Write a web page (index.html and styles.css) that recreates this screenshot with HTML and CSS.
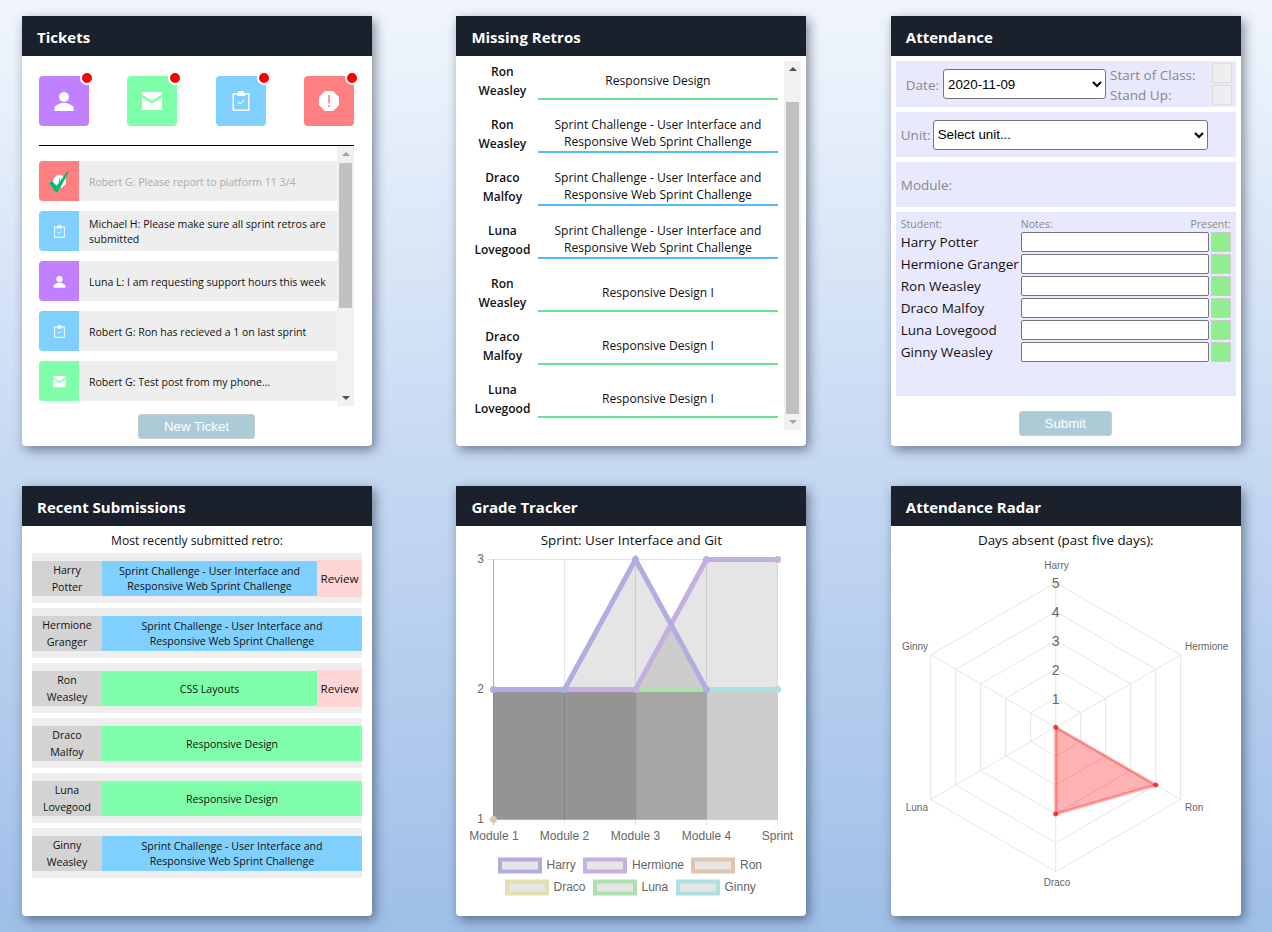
FILE: index.html
```html
<!DOCTYPE html>
<html lang="en">
<head>
    <meta charset="UTF-8">
    <meta name="viewport" content="width=device-width, initial-scale=1.0">
    <title>Dashboard</title>
    <link rel="stylesheet" href="styles.css">
</head>
<body>
    <!-- icon sprites -->
    <svg class="sprites" width="0" height="0">
        <symbol id="i-person" viewBox="0 0 24 24"><circle cx="12" cy="8" r="5"/><path d="M2.500 22v-3.500c0-2 4.500-3 6.500-4.500h6c2 1.500 6.500 2.500 6.500 4.500V22z"/></symbol>
        <symbol id="i-mail" viewBox="0 0 24 24"><path d="M2 3h20v2.500l-10 6-10-6z"/><path d="M2 8.500l10 6 10-6V21H2z"/></symbol>
        <symbol id="i-clip" viewBox="0 0 24 24"><path fill-rule="evenodd" d="M3.500 4H9V2h6v2h5.500v18h-17zM5 5.500v15h14v-15h-3V7H8V5.500z"/><path d="M8.500 13l.7-.7 2 2 3.800-3.900.7.700-4.500 4.600z"/></symbol>
        <symbol id="i-stop" viewBox="0 0 24 24"><path fill-rule="evenodd" d="M8 2h8l6 6v8l-6 6H8l-6-6V8zM11.200 6v8.500h1.600V6zM11.200 16v2h1.600v-2z"/></symbol>
    </svg>

    <div class="dashboard">

        <!-- Tickets -->
        <section class="card">
            <h2 class="card-title">Tickets</h2>
            <div class="tickets">
                <div class="ticket-types">
                    <div class="type bg-purple"><svg class="icon-big"><use href="#i-person"/></svg><span class="dot"></span></div>
                    <div class="type bg-green"><svg class="icon-big"><use href="#i-mail"/></svg><span class="dot"></span></div>
                    <div class="type bg-blue"><svg class="icon-big"><use href="#i-clip"/></svg><span class="dot"></span></div>
                    <div class="type bg-red"><svg class="icon-big"><use href="#i-stop"/></svg><span class="dot"></span></div>
                </div>
                <div class="ticket-box">
                    <div class="ticket-list">
                        <div class="ticket done">
                            <div class="ticket-icon bg-red">
                                <svg class="icon-small"><use href="#i-stop"/></svg>
                                <svg class="check" viewBox="0 0 22 22"><path d="M0 12l3-2 5 5L19 0h2L9 22H7z"/></svg>
                            </div>
                            <p>Robert G: Please report to platform 11 3/4</p>
                        </div>
                        <div class="ticket">
                            <div class="ticket-icon bg-blue"><svg class="icon-small"><use href="#i-clip"/></svg></div>
                            <p>Michael H: Please make sure all sprint retros are submitted</p>
                        </div>
                        <div class="ticket">
                            <div class="ticket-icon bg-purple"><svg class="icon-small"><use href="#i-person"/></svg></div>
                            <p>Luna L: I am requesting support hours this week</p>
                        </div>
                        <div class="ticket">
                            <div class="ticket-icon bg-blue"><svg class="icon-small"><use href="#i-clip"/></svg></div>
                            <p>Robert G: Ron has recieved a 1 on last sprint</p>
                        </div>
                        <div class="ticket">
                            <div class="ticket-icon bg-green"><svg class="icon-small"><use href="#i-mail"/></svg></div>
                            <p>Robert G: Test post from my phone...</p>
                        </div>
                    </div>
                    <div class="scrollbar scroll-tickets">
                        <span class="arrow-up"></span>
                        <span class="thumb"></span>
                        <span class="arrow-down"></span>
                    </div>
                </div>
                <button class="btn btn-ticket">New Ticket</button>
            </div>
        </section>

        <!-- Missing Retros -->
        <section class="card">
            <h2 class="card-title">Missing Retros</h2>
            <div class="retros">
                <div class="retro-list">
                    <div class="retro"><div class="retro-name">Ron Weasley</div><div class="retro-unit line-green">Responsive Design</div></div>
                    <div class="retro"><div class="retro-name">Ron Weasley</div><div class="retro-unit line-blue">Sprint Challenge - User Interface and Responsive Web Sprint Challenge</div></div>
                    <div class="retro"><div class="retro-name">Draco Malfoy</div><div class="retro-unit line-blue">Sprint Challenge - User Interface and Responsive Web Sprint Challenge</div></div>
                    <div class="retro"><div class="retro-name">Luna Lovegood</div><div class="retro-unit line-blue">Sprint Challenge - User Interface and Responsive Web Sprint Challenge</div></div>
                    <div class="retro"><div class="retro-name">Ron Weasley</div><div class="retro-unit line-green">Responsive Design I</div></div>
                    <div class="retro"><div class="retro-name">Draco Malfoy</div><div class="retro-unit line-green">Responsive Design I</div></div>
                    <div class="retro"><div class="retro-name">Luna Lovegood</div><div class="retro-unit line-green">Responsive Design I</div></div>
                </div>
                <div class="scrollbar scroll-retros">
                    <span class="arrow-up"></span>
                    <span class="thumb"></span>
                    <span class="arrow-down"></span>
                </div>
            </div>
        </section>

        <!-- Attendance -->
        <section class="card">
            <h2 class="card-title">Attendance</h2>
            <div class="attendance">
                <div class="panel panel-date">
                    <label class="label date-label">Date:</label>
                    <select class="date-select"><option>2020-11-09</option></select>
                    <div class="class-labels">
                        <span class="label">Start of Class:</span>
                        <span class="label">Stand Up:</span>
                    </div>
                    <div class="class-boxes">
                        <span class="box"></span>
                        <span class="box"></span>
                    </div>
                </div>
                <div class="panel panel-unit">
                    <label class="label">Unit:</label>
                    <select class="unit-select"><option>Select unit...</option></select>
                </div>
                <div class="panel panel-module">
                    <span class="label">Module:</span>
                </div>
                <div class="panel panel-students">
                    <div class="student-head">
                        <span class="col-name">Student:</span>
                        <span class="col-notes">Notes:</span>
                        <span class="col-present">Present:</span>
                    </div>
                    <div class="student"><span class="col-name">Harry Potter</span><input class="col-notes" type="text"><span class="present"></span></div>
                    <div class="student"><span class="col-name">Hermione Granger</span><input class="col-notes" type="text"><span class="present"></span></div>
                    <div class="student"><span class="col-name">Ron Weasley</span><input class="col-notes" type="text"><span class="present"></span></div>
                    <div class="student"><span class="col-name">Draco Malfoy</span><input class="col-notes" type="text"><span class="present"></span></div>
                    <div class="student"><span class="col-name">Luna Lovegood</span><input class="col-notes" type="text"><span class="present"></span></div>
                    <div class="student"><span class="col-name">Ginny Weasley</span><input class="col-notes" type="text"><span class="present"></span></div>
                </div>
                <button class="btn btn-submit">Submit</button>
            </div>
        </section>

        <!-- Recent Submissions -->
        <section class="card">
            <h2 class="card-title">Recent Submissions</h2>
            <div class="submissions">
                <p class="sub-title">Most recently submitted retro:</p>
                <div class="submission"><div class="sub-name">Harry Potter</div><div class="sub-unit bg-blue">Sprint Challenge - User Interface and<br>Responsive Web Sprint Challenge</div><div class="sub-review">Review</div></div>
                <div class="submission"><div class="sub-name">Hermione Granger</div><div class="sub-unit bg-blue">Sprint Challenge - User Interface and<br>Responsive Web Sprint Challenge</div></div>
                <div class="submission"><div class="sub-name">Ron Weasley</div><div class="sub-unit bg-green">CSS Layouts</div><div class="sub-review">Review</div></div>
                <div class="submission"><div class="sub-name">Draco Malfoy</div><div class="sub-unit bg-green">Responsive Design</div></div>
                <div class="submission"><div class="sub-name">Luna Lovegood</div><div class="sub-unit bg-green">Responsive Design</div></div>
                <div class="submission"><div class="sub-name">Ginny Weasley</div><div class="sub-unit bg-blue">Sprint Challenge - User Interface and<br>Responsive Web Sprint Challenge</div></div>
            </div>
        </section>

        <!-- Grade Tracker -->
        <section class="card">
            <h2 class="card-title">Grade Tracker</h2>
            <p class="chart-title">Sprint: User Interface and Git</p>
            <svg class="chart" viewBox="0 0 350 350" width="350" height="350">
                <!-- grid -->
                <g class="grid">
                    <path d="M32 9.500H321.500M32 139.500H321.500M32 269.500H321.500"/>
                    <path d="M108.500 9V275M179.500 9V275M250.500 9V275M321.500 9V275"/>
                    <path class="axis" d="M37.500 9V275"/>
                </g>
                <!-- dataset fills, last dataset first -->
                <g class="fills">
                    <polygon points="37.500,139.500 321.500,139.500 321.500,269.500 37.500,269.500"/>
                    <polygon points="37.500,139.500 250.500,139.500 250.500,269.500 37.500,269.500"/>
                    <polygon points="37.500,139.500 179.500,139.500 179.500,269.500 37.500,269.500"/>
                    <polygon points="37.500,139.500 179.500,139.500 250.500,9.500 321.500,9.500 321.500,269.500 37.500,269.500"/>
                    <polygon points="37.500,139.500 108.500,139.500 179.500,9.500 250.500,139.500 250.500,269.500 37.500,269.500"/>
                </g>
                <!-- dataset lines -->
                <g class="lines">
                    <polyline class="c-ginny" points="37.500,139.500 321.500,139.500"/>
                    <polyline class="c-luna" points="37.500,139.500 250.500,139.500"/>
                    <polyline class="c-draco" points="37.500,139.500 179.500,139.500"/>
                    <polyline class="c-hermione" points="37.500,139.500 179.500,139.500 250.500,9.500 321.500,9.500"/>
                    <polyline class="c-harry" points="37.500,139.500 108.500,139.500 179.500,9.500 250.500,139.500"/>
                </g>
                <g class="points">
                    <circle class="c-ginny" cx="321.500" cy="139.500" r="3.500"/>
                    <circle class="c-hermione" cx="321.500" cy="9.500" r="3.500"/>
                    <circle class="c-hermione" cx="250.500" cy="9.500" r="3.500"/>
                    <circle class="c-hermione" cx="179.500" cy="139.500" r="3.500"/>
                    <circle class="c-ron" cx="37.500" cy="269.500" r="3.500"/>
                    <circle class="c-harry" cx="37.500" cy="139.500" r="3.500"/>
                    <circle class="c-harry" cx="108.500" cy="139.500" r="3.500"/>
                    <circle class="c-harry" cx="179.500" cy="9.500" r="3.500"/>
                    <circle class="c-harry" cx="250.500" cy="139.500" r="3.500"/>
                </g>
                <!-- labels -->
                <g class="ticks">
                    <text x="28" y="12.500" text-anchor="end">3</text>
                    <text x="28" y="142.500" text-anchor="end">2</text>
                    <text x="28" y="272.500" text-anchor="end">1</text>
                    <text x="38" y="290" text-anchor="middle">Module 1</text>
                    <text x="108.500" y="290" text-anchor="middle">Module 2</text>
                    <text x="179.500" y="290" text-anchor="middle">Module 3</text>
                    <text x="250.500" y="290" text-anchor="middle">Module 4</text>
                    <text x="321.500" y="290" text-anchor="middle">Sprint</text>
                </g>
                <!-- legend -->
                <g class="legend">
                    <rect class="c-harry" x="44" y="309.500" width="40" height="12"/>
                    <text x="90.500" y="319">Harry</text>
                    <rect class="c-hermione" x="129" y="309.500" width="40" height="12"/>
                    <text x="176" y="319">Hermione</text>
                    <rect class="c-ron" x="237" y="309.500" width="40" height="12"/>
                    <text x="284" y="319">Ron</text>
                    <rect class="c-draco" x="51" y="331.500" width="40" height="12"/>
                    <text x="97.500" y="341">Draco</text>
                    <rect class="c-luna" x="139" y="331.500" width="40" height="12"/>
                    <text x="185.500" y="341">Luna</text>
                    <rect class="c-ginny" x="222" y="331.500" width="40" height="12"/>
                    <text x="268.500" y="341">Ginny</text>
                </g>
            </svg>
        </section>

        <!-- Attendance Radar -->
        <section class="card">
            <h2 class="card-title">Attendance Radar</h2>
            <p class="chart-title">Days absent (past five days):</p>
            <svg class="chart" viewBox="0 0 350 350" width="350" height="350">
                <g class="grid">
                    <polygon points="164.700,148.300 189.700,162.800 189.700,191.700 164.700,206.100 139.700,191.700 139.700,162.800"/>
                    <polygon points="164.700,119.400 214.700,148.300 214.700,206.100 164.700,235 114.700,206.100 114.700,148.300"/>
                    <polygon points="164.700,90.500 239.700,133.800 239.700,220.600 164.700,263.900 89.700,220.600 89.700,133.800"/>
                    <polygon points="164.700,61.600 264.700,119.400 264.700,235 164.700,292.800 64.700,235 64.700,119.400"/>
                    <polygon points="164.700,32.700 289.700,104.900 289.700,249.500 164.700,321.700 39.700,249.500 39.700,104.900"/>
                    <path d="M164.700 177.200V32.700M164.700 177.200L289.700 104.900M164.700 177.200L289.700 249.500M164.700 177.200V321.700M164.700 177.200L39.700 249.500M164.700 177.200L39.700 104.900"/>
                </g>
                <polygon class="radar-area" points="164.700,177.200 264.700,235 164.700,263.900"/>
                <circle class="radar-point" cx="164.700" cy="177.200" r="2.500"/>
                <circle class="radar-point" cx="264.700" cy="235" r="2.500"/>
                <circle class="radar-point" cx="164.700" cy="263.900" r="2.500"/>
                <g class="ticks radar-ticks">
                    <text x="164.700" y="37.500" text-anchor="middle">5</text>
                    <text x="164.700" y="66.500" text-anchor="middle">4</text>
                    <text x="164.700" y="95.500" text-anchor="middle">3</text>
                    <text x="164.700" y="124.500" text-anchor="middle">2</text>
                    <text x="164.700" y="153.500" text-anchor="middle">1</text>
                </g>
                <g class="radar-labels">
                    <text x="165.500" y="18.500" text-anchor="middle">Harry</text>
                    <text x="294" y="100">Hermione</text>
                    <text x="294" y="261">Ron</text>
                    <text x="166" y="336" text-anchor="middle">Draco</text>
                    <text x="37" y="261" text-anchor="end">Luna</text>
                    <text x="37" y="100" text-anchor="end">Ginny</text>
                </g>
            </svg>
        </section>

    </div>
</body>
</html>
```

FILE: styles.css
```css
* {
    box-sizing: border-box;
}
body {
    margin: 0;
    height: 932px;
    overflow: hidden;
    font-family: "Open Sans", "Noto Sans", sans-serif;
    background: linear-gradient(to bottom, #f1f6fd 0%, #c6d9f2 50%, #9fbfe8 100%);
}
.sprites {
    position: absolute;
}
.dashboard {
    display: grid;
    grid-template-columns: repeat(3, 350px);
    grid-auto-rows: 430px;
    column-gap: 84.4px;
    row-gap: 40px;
    padding: 16px 0 0 22px;
}
.card {
    background-color: #fff;
    border-radius: 0 0 4px 4px;
    box-shadow: 3px 4px 12px rgba(20, 30, 50, 0.5);
    overflow: hidden;
}
.card-title {
    margin: 0;
    height: 40px;
    padding-left: 15px;
    background-color: #1a202c;
    color: #fff;
    font-size: 15px;
    font-weight: 700;
    line-height: 43px;
}
.bg-purple { background-color: #c080ff; }
.bg-green { background-color: #80ffaa; }
.bg-blue { background-color: #80d0ff; }
.bg-red { background-color: #ff8080; }

/* Tickets */
.tickets {
    padding: 20px 18px 0 17px;
}
.ticket-types {
    display: flex;
    justify-content: space-between;
    padding-bottom: 19px;
    border-bottom: 1px solid #000;
}
.type {
    position: relative;
    display: flex;
    align-items: center;
    justify-content: center;
    width: 50px;
    height: 50px;
    border-radius: 4px;
}
.icon-big {
    width: 24px;
    height: 24px;
    fill: #fff;
}
.icon-small {
    width: 15px;
    height: 15px;
    fill: #fff;
}
.dot {
    position: absolute;
    top: -5px;
    right: -5px;
    width: 14px;
    height: 14px;
    border: 2px solid #fff;
    border-radius: 50%;
    background-color: #f00;
}
.ticket-box {
    display: flex;
    height: 260px;
}
.ticket-list {
    width: 298px;
    padding-top: 15px;
}
.ticket {
    display: flex;
    height: 40px;
    margin-bottom: 10px;
    background-color: #eee;
    border-radius: 4px 0 0 4px;
    font-size: 10.55px;
    line-height: 15px;
    color: #111;
}
.ticket p {
    margin: 0;
    padding: 2px 0 0 10px;
    align-self: center;
}
.ticket.done {
    color: #aaa;
}
.ticket-icon {
    position: relative;
    flex: none;
    display: flex;
    align-items: center;
    justify-content: center;
    width: 40px;
    border-radius: 4px 0 0 4px;
}
.check {
    position: absolute;
    left: 10px;
    top: 10px;
    width: 21px;
    height: 22px;
    fill: #00c070;
}

/* fake scrollbars */
.scrollbar {
    display: flex;
    flex-direction: column;
    align-items: center;
    width: 17px;
    background-color: #f1f1f1;
}
.thumb {
    width: 13px;
    background-color: #c1c1c1;
}
.arrow-up, .arrow-down {
    width: 0;
    height: 0;
    border-left: 4px solid transparent;
    border-right: 4px solid transparent;
}
.arrow-up {
    margin-top: 6px;
    border-bottom: 4px solid #505050;
}
.arrow-down {
    margin-top: auto;
    margin-bottom: 6px;
    border-top: 4px solid #505050;
}
.scroll-tickets .arrow-up {
    border-bottom-color: #a3a3a3;
}
.scroll-tickets .thumb {
    height: 145px;
    margin-top: 7px;
}
.scroll-retros {
    flex: none;
    height: 369px;
    margin: 5px 0 0 6px;
}
.scroll-retros .thumb {
    height: 312px;
    margin-top: 31px;
}
.scroll-retros .arrow-down {
    border-top-color: #a3a3a3;
}

.btn {
    display: block;
    border: 1px solid #c4ccd0;
    border-radius: 3px;
    background-color: #abcbd7;
    color: #fff;
    font-family: "Liberation Sans", sans-serif;
    font-size: 13.33px;
    text-align: center;
    padding: 0 0 1px;
}
.btn-ticket {
    width: 117px;
    height: 25px;
    margin: 8px 0 0 99px;
}

/* Missing Retros */
.retros {
    display: flex;
    padding-left: 10px;
}
.retro-list {
    width: 312px;
}
.retro {
    display: flex;
    height: 53px;
    padding-top: 6px;
}
.retro-name {
    width: 72px;
    padding: 0 8px;
    text-align: center;
    font-size: 12px;
    font-weight: 600;
    line-height: 19px;
    color: #111;
}
.retro-unit {
    display: flex;
    align-items: center;
    justify-content: center;
    width: 240px;
    height: 38px;
    padding: 0 13px 0 12px;
    text-align: center;
    font-size: 12.1px;
    line-height: 17px;
    color: #111;
    border-bottom: 2px solid;
}
.line-green { border-bottom-color: #66e391; }
.line-blue { border-bottom-color: #4dbdf7; }

/* Attendance */
.attendance {
    padding: 5px 5px 0;
}
.panel {
    background-color: #e9e9fe;
    margin-bottom: 5px;
    height: 45px;
    display: flex;
    align-items: center;
}
.label {
    color: #888;
    font-size: 13.5px;
}
.panel-date {
    height: 46px;
    padding-left: 10px;
}
.date-label {
    margin-top: 1px;
}
select {
    height: 30px;
    font-family: "Liberation Sans", sans-serif;
    font-size: 13.33px;
    background-color: #fff;
    border: 1px solid #767676;
    border-radius: 3px;
    color: #000;
}
.date-select {
    width: 163px;
    margin-left: 4px;
}
.class-labels {
    display: flex;
    flex-direction: column;
    margin: 2px 0 0 4px;
    width: 102px;
    line-height: 20px;
}
.class-boxes {
    display: flex;
    flex-direction: column;
    gap: 2px;
}
.box {
    width: 20px;
    height: 20px;
    background-color: #eee;
    border: 1px solid #ddd;
}
.panel-unit {
    padding-left: 5px;
}
.unit-select {
    width: 275px;
    margin-left: 2px;
}
.panel-module {
    padding-left: 5px;
}
.panel-students {
    display: block;
    height: 184px;
    padding: 4px 5px 0;
    margin-bottom: 15px;
}
.student-head, .student {
    display: flex;
    align-items: center;
}
.student-head {
    height: 15px;
    font-size: 10.5px;
    color: #888;
}
.student-head .col-notes {
    width: auto;
    flex: 1;
}
.student {
    height: 22px;
    font-size: 13.5px;
    color: #111;
}
.col-name {
    width: 120px;
    flex: none;
    white-space: nowrap;
}
.col-notes {
    width: 188px;
    flex: none;
}
.student input {
    height: 20px;
    margin: 0;
    background-color: #fff;
    border: 1px solid #767676;
    border-radius: 2px;
}
.present {
    width: 20px;
    height: 20px;
    margin-left: 2px;
    background-color: #90ee90;
    border: 1px solid #ccc;
}
.btn-submit {
    width: 93px;
    height: 25px;
    margin: 0 0 0 123px;
}

/* Recent Submissions */
.submissions {
    padding: 0 10px;
}
.sub-title, .chart-title {
    margin: 0;
    height: 27px;
    line-height: 29px;
    text-align: center;
    font-size: 12.1px;
    color: #111;
}
.chart-title {
    font-size: 13.4px;
}
.submission {
    display: flex;
    align-items: center;
    height: 50px;
    margin-bottom: 5px;
    background-color: #eee;
    font-size: 10.6px;
    line-height: 15px;
    color: #111;
    text-align: center;
}
.sub-name {
    display: flex;
    align-items: center;
    justify-content: center;
    width: 70px;
    height: 35px;
    padding: 2px 10px 0;
    line-height: 17px;
    background-color: #d3d3d3;
}
.sub-unit {
    flex: 1;
    display: flex;
    align-items: center;
    justify-content: center;
    height: 35px;
    padding-top: 2px;
}
.sub-review {
    display: flex;
    align-items: center;
    justify-content: center;
    width: 45px;
    height: 37px;
    font-size: 11.6px;
    background-color: #ffd5d5;
}

/* Charts */
.chart {
    display: block;
    margin-top: -3px;
}
.grid {
    fill: none;
    stroke: #e5e5e5;
    stroke-width: 1;
}
.grid .axis {
    stroke: #b0b0b0;
}
.fills polygon {
    fill: rgba(0, 0, 0, 0.1);
}
.lines polyline {
    fill: none;
    stroke-width: 5;
}
.lines .c-harry { stroke: #aeaee0; }
.lines .c-hermione { stroke: #c5aee0; }
.lines .c-draco { stroke: #e0e0ae; }
.lines .c-luna { stroke: #aee0ae; }
.lines .c-ginny { stroke: #aee0e0; }
.points .c-harry { fill: #aeaee0; }
.points .c-hermione { fill: #c5aee0; }
.points .c-ron { fill: #e0c5ae; }
.points .c-ginny { fill: #aee0e0; }
.ticks text, .legend text {
    font-family: "Liberation Sans", sans-serif;
    font-size: 12px;
    fill: #666;
}
.radar-ticks text {
    font-size: 14px;
}
.legend rect {
    fill: #e5e5e5;
    stroke-width: 4;
}
.legend .c-harry { stroke: #aeaee0; }
.legend .c-hermione { stroke: #c5aee0; }
.legend .c-ron { stroke: #e0c5ae; }
.legend .c-draco { stroke: #e0e0ae; }
.legend .c-luna { stroke: #aee0ae; }
.legend .c-ginny { stroke: #aee0e0; }
.radar-area {
    fill: rgba(255, 0, 0, 0.3);
    stroke: rgba(255, 0, 0, 0.3);
    stroke-width: 3;
}
.radar-point {
    fill: rgba(255, 0, 0, 0.7);
}
.radar-labels text {
    font-family: "Liberation Sans", sans-serif;
    font-size: 10px;
    fill: #666;
}
```
